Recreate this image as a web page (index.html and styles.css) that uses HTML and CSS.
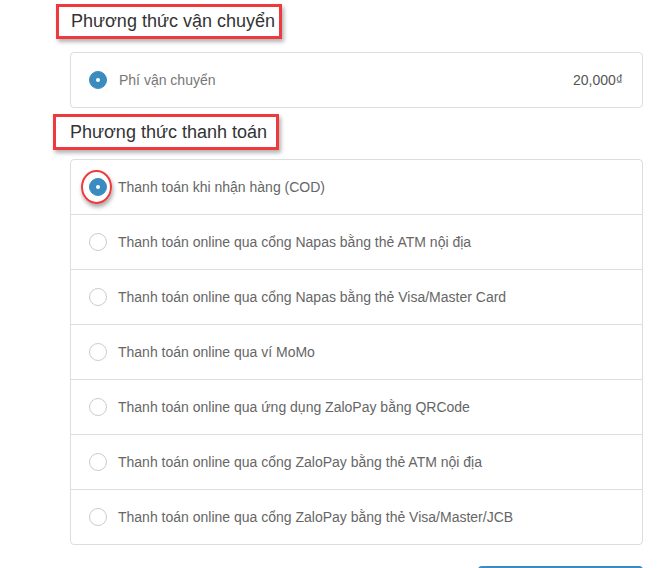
FILE: index.html
```html
<!DOCTYPE html>
<html lang="vi">
<head>
    <meta charset="UTF-8">
    <title>Thanh toán</title>
    <link rel="stylesheet" href="styles.css">
</head>
<body>
    <div class="checkout">
        <!-- vận chuyển -->
        <h3 class="section-title title-ship">Phương thức vận chuyển</h3>
        <div class="option-box">
            <div class="option-row">
                <span class="radio checked"></span>
                <span class="option-label fee">Phí vận chuyển</span>
                <span class="price">20,000₫</span>
            </div>
        </div>

        <!-- thanh toán -->
        <h3 class="section-title title-pay">Phương thức thanh toán</h3>
        <div class="option-box">
            <div class="option-row">
                <span class="radio checked marked"></span>
                <span class="option-label">Thanh toán khi nhận hàng (COD)</span>
            </div>
            <div class="option-row">
                <span class="radio"></span>
                <span class="option-label">Thanh toán online qua cổng Napas bằng thẻ ATM nội địa</span>
            </div>
            <div class="option-row">
                <span class="radio"></span>
                <span class="option-label">Thanh toán online qua cổng Napas bằng thẻ Visa/Master Card</span>
            </div>
            <div class="option-row">
                <span class="radio"></span>
                <span class="option-label">Thanh toán online qua ví MoMo</span>
            </div>
            <div class="option-row">
                <span class="radio"></span>
                <span class="option-label">Thanh toán online qua ứng dụng ZaloPay bằng QRCode</span>
            </div>
            <div class="option-row">
                <span class="radio"></span>
                <span class="option-label">Thanh toán online qua cổng ZaloPay bằng thẻ ATM nội địa</span>
            </div>
            <div class="option-row">
                <span class="radio"></span>
                <span class="option-label">Thanh toán online qua cổng ZaloPay bằng thẻ Visa/Master/JCB</span>
            </div>
        </div>

        <div class="actions">
            <button class="btn-submit">Hoàn tất đơn hàng</button>
        </div>
    </div>
</body>
</html>
```

FILE: styles.css
```css
/* chung */
body {
    margin: 0;
    background: #fff;
    font-family: 'Liberation Sans', Arial, sans-serif;
    color: #333;
}

.checkout {
    width: 573px;
    margin-left: 70px;
    padding-top: 4px;
}

/* tiêu đề có khung đỏ */
.section-title {
    display: inline-block;
    margin: 0;
    font-size: 18px;
    font-weight: normal;
    line-height: 29px;
    color: #333;
    background: #fff;
    border: 3px solid #ee3a3d;
    box-shadow: 2px 3px 4px rgba(0, 0, 0, 0.3);
}

.title-ship {
    margin-left: -14px;
    padding: 0 4px 0 12px;
    margin-bottom: 13px;
}

.title-pay {
    margin-left: -17px;
    margin-top: 6px;
    padding: 0 9px 0 14px;
    line-height: 30px;
    margin-bottom: 9px;
}

/* hộp lựa chọn */
.option-box {
    border: 1px solid #ddd;
    border-radius: 4px;
}

.option-row {
    display: flex;
    align-items: center;
    height: 54px;
    padding-left: 18px;
    padding-right: 19px;
    border-top: 1px solid #ddd;
}

.option-row:first-child {
    border-top: none;
}

.radio {
    position: relative;
    width: 16px;
    height: 16px;
    border: 1px solid #ccc;
    border-radius: 50%;
    background: #fff;
    flex-shrink: 0;
    margin-right: 11px;
}

.radio.checked {
    background: #3a8bc0;
    border-color: #3a8bc0;
}

.radio.checked::before {
    content: "";
    position: absolute;
    left: 6px;
    top: 6px;
    width: 4px;
    height: 4px;
    border-radius: 50%;
    background: #fff;
}

/* vòng đỏ đánh dấu */
.radio.marked::after {
    content: "";
    position: absolute;
    left: -9px;
    top: -9px;
    width: 27px;
    height: 30px;
    border: 2px solid #ee3a3d;
    border-radius: 50%;
    box-shadow: 1px 3px 4px rgba(0, 0, 0, 0.35);
}

.option-label {
    font-size: 14px;
    color: #666;
}

.option-label.fee {
    color: #777;
    margin-left: 1px;
}

.price {
    margin-left: auto;
    font-size: 14px;
    color: #555;
}

/* nút */
.actions {
    display: flex;
    justify-content: flex-end;
    margin-top: 21px;
}

.btn-submit {
    width: 165px;
    height: 40px;
    background: #3a8bc0;
    color: #fff;
    border: none;
    border-radius: 4px;
    font-family: 'Liberation Sans', Arial, sans-serif;
    font-size: 14px;
}
```
